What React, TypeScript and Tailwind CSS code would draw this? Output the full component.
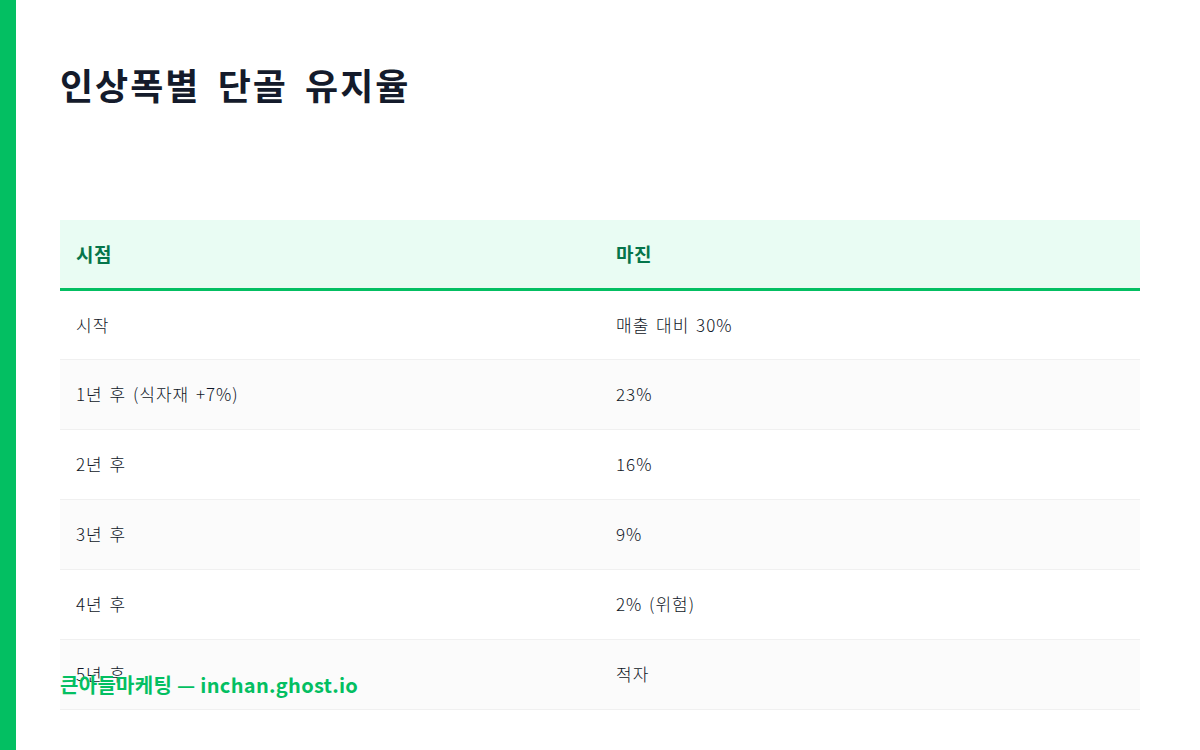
const rows = [
  ["시작", "매출 대비 30%"],
  ["1년 후 (식자재 +7%)", "23%"],
  ["2년 후", "16%"],
  ["3년 후", "9%"],
  ["4년 후", "2% (위험)"],
  ["5년 후", "적자"],
]

const font = { fontFamily: '"Noto Sans CJK KR", "Noto Sans", sans-serif' }

export default function App() {
  return (
    <div className="relative w-[1200px] h-[750px] bg-white overflow-hidden flex" style={font}>
      <div className="w-4 h-full bg-[#03bf62]" />
      <div className="flex-1 pl-[44px] pr-[60px] pt-[56px]">
        <h1 className="text-[36px] leading-[56px] font-bold text-[#141b2b] tracking-[2px] [word-spacing:7px]">
          인상폭별 단골 유지율
        </h1>
        <table className="mt-[108px] w-full border-collapse">
          <thead>
            <tr className="bg-[#e9fcf3] border-b-[3px] border-[#03bf62]">
              <th className="w-1/2 h-[69px] px-4 text-left text-[19px] tracking-[0.5px] font-bold text-[#05754a]">시점</th>
              <th className="w-1/2 h-[69px] px-4 text-left text-[19px] tracking-[0.5px] font-bold text-[#05754a]">마진</th>
            </tr>
          </thead>
          <tbody>
            {rows.map((r, i) => (
              <tr key={i} className={`border-b border-[#f0f0f0] ${i % 2 === 1 ? "bg-[#fbfbfb]" : "bg-white"}`}>
                <td className="h-[70px] px-4 text-[17px] font-light tracking-[1px] [word-spacing:2px] text-[#0f1626]">{r[0]}</td>
                <td className="h-[70px] px-4 text-[17px] font-light tracking-[1px] [word-spacing:2px] text-[#0f1626]">{r[1]}</td>
              </tr>
            ))}
          </tbody>
        </table>
      </div>
      <div className="absolute left-[60px] bottom-[50px] text-[20px] font-bold tracking-[0.3px] text-[#03bf62]">
        큰아들마케팅 — inchan.ghost.io
      </div>
    </div>
  )
}
